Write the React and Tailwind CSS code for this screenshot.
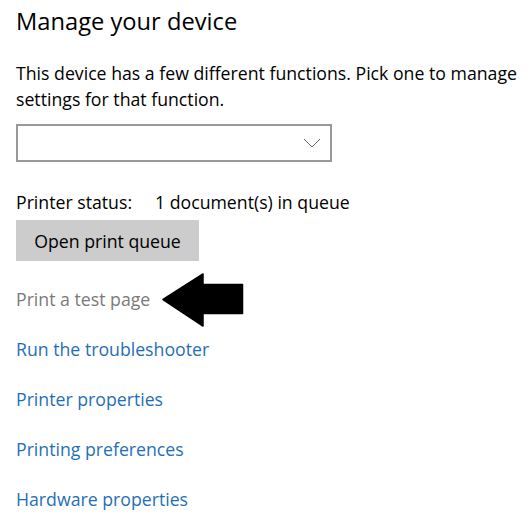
export default function App() {
  const links = [
    "Run the troubleshooter",
    "Printer properties",
    "Printing preferences",
    "Hardware properties",
  ];

  return (
    <div className="w-[530px] h-[532px] overflow-hidden bg-white px-4 font-['Open_Sans',sans-serif] text-black">
      <h1 className="pt-[5px] text-[23.7px] leading-[32px] font-normal">Manage your device</h1>

      <p className="mt-[23px] text-[17.7px] leading-[26px] w-[514px]">
        This device has a few different functions. Pick one to manage settings for that function.
      </p>

      <div className="mt-[12px] w-[316px] h-[38px] border-2 border-[#999999] flex items-center justify-end pr-[9px]">
        <svg width="18" height="10" viewBox="0 0 18 10" fill="none">
          <path d="M1 1 9 9 17 1" stroke="#6b6b6b" strokeWidth="1" />
        </svg>
      </div>

      <div className="mt-[27px] flex text-[17.7px] leading-[26px]">
        <span className="w-[139px]">Printer status:</span>
        <span>1 document(s) in queue</span>
      </div>

      <button className="mt-[5px] w-[183px] h-[41px] bg-[#cccccc] flex items-center justify-center text-[17.7px] leading-[26px]">
        Open print queue
      </button>

      <div className="relative mt-[25px] text-[17.7px] leading-[26px] text-[#7a7a7a]">
        Print a test page
        <svg className="absolute left-[146px] top-[-13px]" width="82" height="54" viewBox="0 0 82 54">
          <path d="M1 26.5 41 1 41 11.5 80.5 11.5 80.5 40.5 41 40.5 41 53Z" fill="#000" stroke="#000" strokeWidth="1.5" strokeLinejoin="round" />
        </svg>
      </div>

      <div className="mt-[24px] flex flex-col gap-[24px]">
        {links.map((l) => (
          <a key={l} className="text-[17.7px] leading-[26px] text-[#1f6fb7] cursor-pointer">
            {l}
          </a>
        ))}
      </div>
    </div>
  );
}
